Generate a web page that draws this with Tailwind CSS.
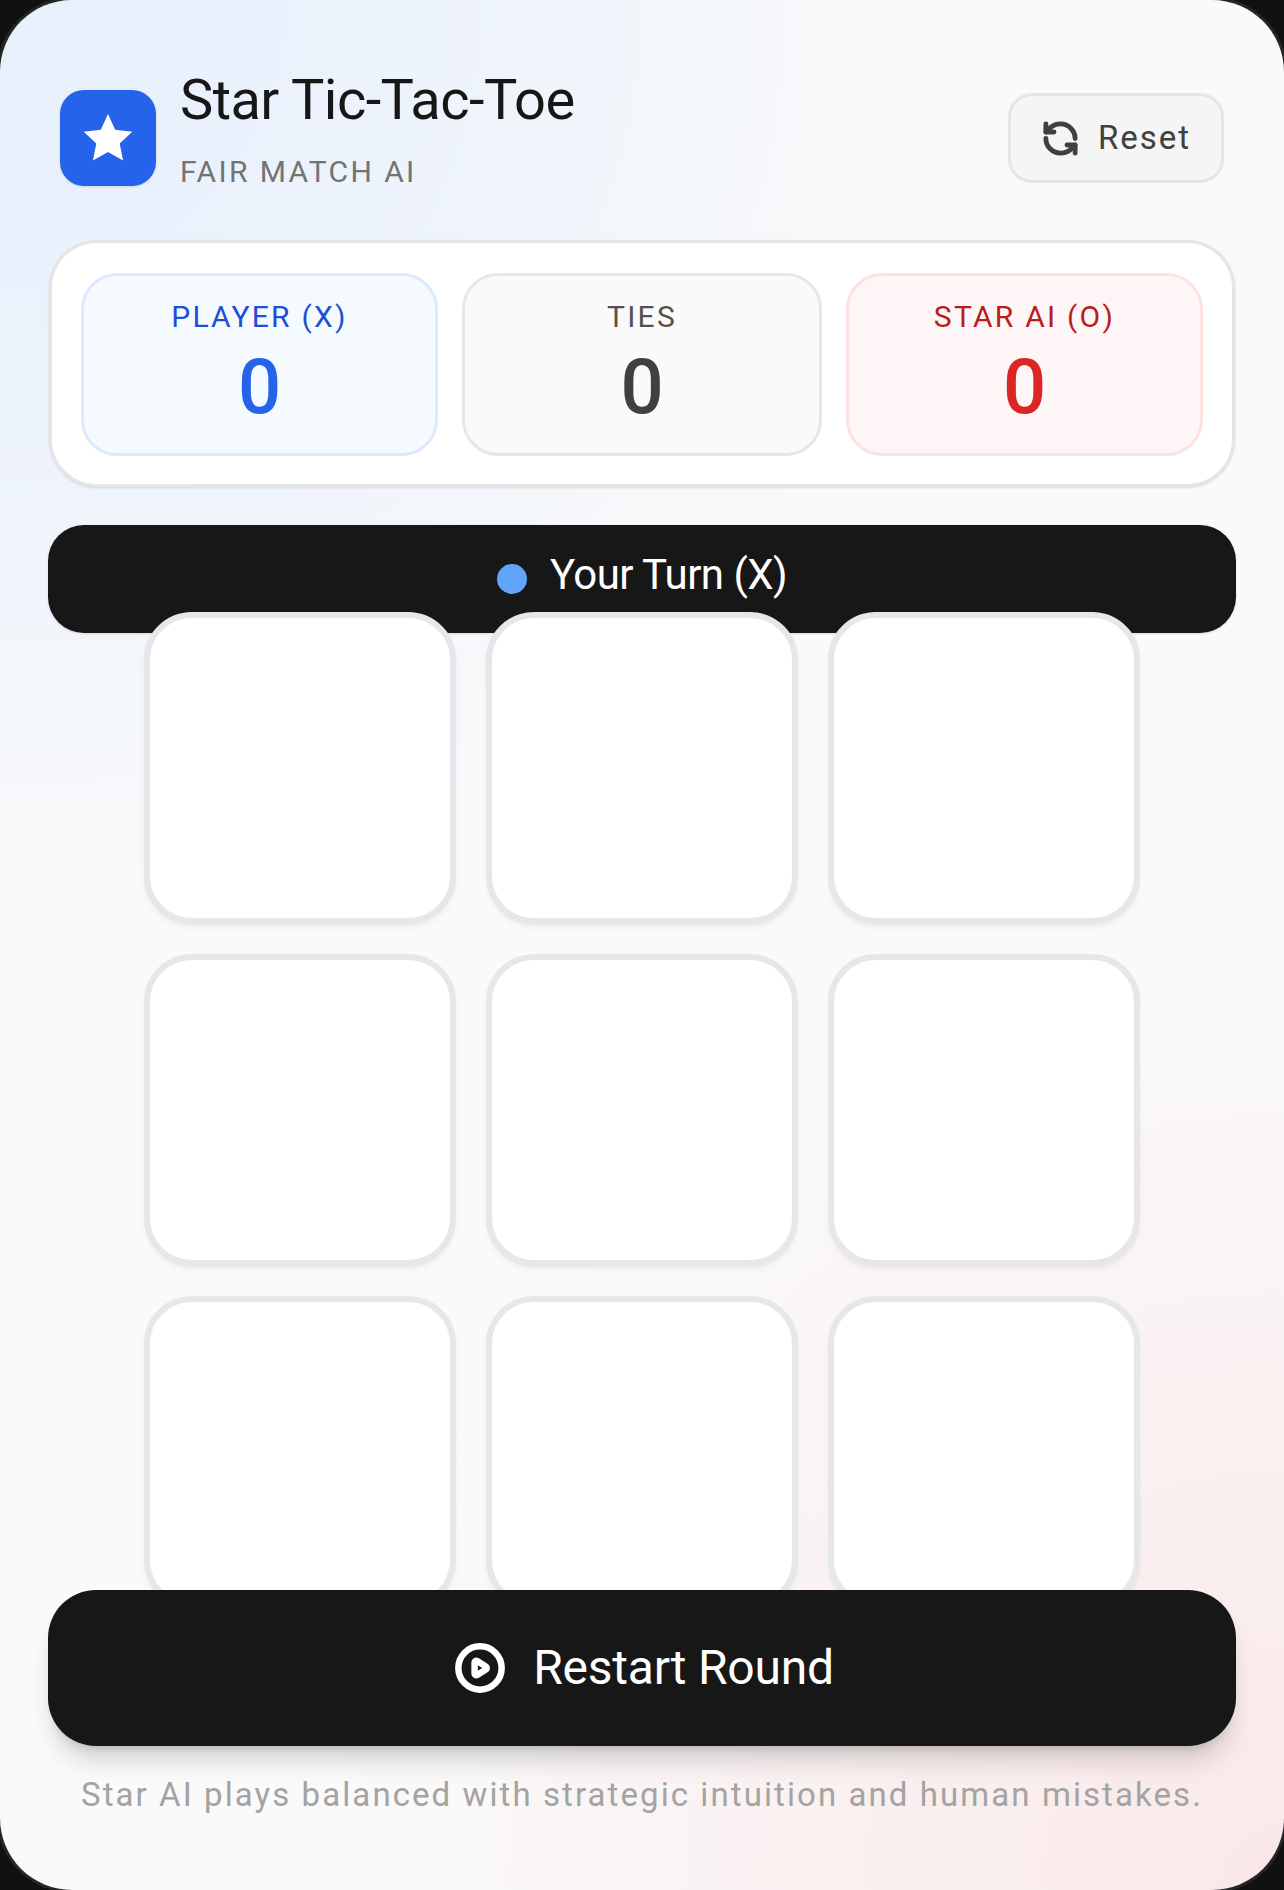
<!DOCTYPE html>
<html lang="en">

<head>
  <meta charset="UTF-8">
  <meta name="viewport" content="width=device-width, initial-scale=1.0">
  <title>Star Tic-Tac-Toe</title>
  <script src="https://cdn.jsdelivr.net/npm/@tailwindcss/browser@4"></script>
</head>

<body class="bg-[#111111]">
  <div class="w-[1284px] h-[1890px] bg-[#111111] overflow-hidden font-[Roboto,sans-serif]">
    <main class="relative h-full rounded-[72px] px-12 pt-[90px] overflow-hidden shadow-[0_0_0_3px_#262626] bg-[#fafafa] bg-[radial-gradient(circle_at_top_left,#e8f0fd_0,#e9f1fc_240px,#e8f0fd00_970px),radial-gradient(circle_at_bottom_right,#fae8e8_0,#fae8e800_950px)]">

      <!-- Header -->
      <header class="flex items-start justify-between px-3 mb-[46px]">
        <div class="flex items-start gap-6">
          <div class="w-24 h-24 rounded-3xl bg-[#2563eb] shadow-sm flex items-center justify-center">
            <svg class="w-[54px] h-[54px]" viewBox="0 0 24 24" fill="#ffffff">
              <path d="M12 1.3l3.2 7 7.6.9-5.6 5.2 1.5 7.6-6.7-3.8L5.300 22l1.500-7.600L1.200 9.200l7.600-.9z" />
            </svg>
          </div>
          <div class="-mt-[32px]">
            <h1 class="text-[56px] leading-[84px] tracking-[-0.01em] text-[#171717]">Star Tic-Tac-Toe</h1>
            <p class="text-[30px] leading-[45px] mt-[7px] tracking-[0.08em] text-[#737373]">FAIR MATCH AI</p>
          </div>
        </div>
        <button class="mt-[3px] w-[216px] h-[90px] flex items-center justify-center gap-[18px] rounded-[24px] border-[3px] border-[#e5e5e5] bg-[#f5f5f5] text-[33px] tracking-[0.06em] text-[#404040]">
          <svg class="w-[39px] h-[39px]" viewBox="0 0 24 24" fill="none" stroke="#404040" stroke-width="3" stroke-linecap="round" stroke-linejoin="round">
            <path d="M21 12a9 9 0 0 0-9-9 9.750 9.750 0 0 0-6.740 2.740L3 8" />
            <path d="M3 3v5h5" />
            <path d="M3 12a9 9 0 0 0 9 9 9.750 9.750 0 0 0 6.740-2.740L21 16" />
            <path d="M16 16h5v5" />
          </svg>
          Reset
        </button>
      </header>

      <!-- Scores -->
      <section class="mx-[1px] h-[247px] mb-[38px] rounded-[48px] border-[3px] border-[#e5e5e5] bg-white shadow-sm px-[29px] pt-[30px] grid grid-cols-[357px_360px_357px] gap-[24px]">
        <div class="h-[183px] rounded-[36px] border-[3px] border-[#dbeafe] bg-[#f5faff] pt-[18px] text-center">
          <p class="text-[30px] leading-[45px] tracking-[0.075em] text-[#1d4ed8]">PLAYER (X)</p>
          <p class="text-[76px] leading-[72px] mt-[12px] font-medium text-[#2563eb]">0</p>
        </div>
        <div class="h-[183px] rounded-[36px] border-[3px] border-[#e5e7eb] bg-[#fafafa] pt-[18px] text-center">
          <p class="text-[30px] leading-[45px] tracking-[0.075em] text-[#525252]">TIES</p>
          <p class="text-[76px] leading-[72px] mt-[12px] font-medium text-[#404040]">0</p>
        </div>
        <div class="h-[183px] rounded-[36px] border-[3px] border-[#fee2e2] bg-[#fef6f6] pt-[18px] text-center">
          <p class="text-[30px] leading-[45px] tracking-[0.075em] text-[#b91c1c]">STAR AI (O)</p>
          <p class="text-[76px] leading-[72px] mt-[12px] font-medium text-[#dc2626]">0</p>
        </div>
      </section>

      <!-- Status -->
      <div class="h-[108px] rounded-[36px] bg-[#171717] shadow-sm flex items-center justify-center gap-[23px]">
        <span class="w-[30px] h-[30px] rounded-full bg-[#60a5fa]"></span>
        <span class="text-[42px] leading-[60px] -mt-[8px] tracking-[-0.013em] text-white">Your Turn (X)</span>
      </div>

      <!-- Board -->
      <div class="relative h-[978px] -mt-[21px]">
        <div class="w-[996px] mx-auto grid grid-cols-3 gap-[30px]">
          <div class="h-[312px] rounded-[48px] border-[6px] border-[#e5e7eb] bg-white shadow-md shadow-black/5"></div>
          <div class="h-[312px] rounded-[48px] border-[6px] border-[#e5e7eb] bg-white shadow-md shadow-black/5"></div>
          <div class="h-[312px] rounded-[48px] border-[6px] border-[#e5e7eb] bg-white shadow-md shadow-black/5"></div>
          <div class="h-[312px] rounded-[48px] border-[6px] border-[#e5e7eb] bg-white shadow-md shadow-black/5"></div>
          <div class="h-[312px] rounded-[48px] border-[6px] border-[#e5e7eb] bg-white shadow-md shadow-black/5"></div>
          <div class="h-[312px] rounded-[48px] border-[6px] border-[#e5e7eb] bg-white shadow-md shadow-black/5"></div>
          <div class="h-[312px] rounded-[48px] border-[6px] border-[#e5e7eb] bg-white shadow-md shadow-black/5"></div>
          <div class="h-[312px] rounded-[48px] border-[6px] border-[#e5e7eb] bg-white shadow-md shadow-black/5"></div>
          <div class="h-[312px] rounded-[48px] border-[6px] border-[#e5e7eb] bg-white shadow-md shadow-black/5"></div>
        </div>
      </div>

      <!-- Restart -->
      <button class="relative w-full h-[156px] pl-[4px] rounded-[48px] bg-[#171717] shadow-xl shadow-black/15 flex items-center justify-center gap-[27px] text-[48px] tracking-[-0.005em] text-white">
        <svg class="w-[52px] h-[52px]" viewBox="0 0 24 24" fill="none" stroke="#ffffff" stroke-width="3" stroke-linecap="round" stroke-linejoin="round">
          <circle cx="12" cy="12" r="10" />
          <path d="M9.500 9.500a.8.8 0 0 1 1.200-.7l4 2.500a.8.8 0 0 1 0 1.400l-4 2.500a.8.8 0 0 1-1.200-.7z" />
        </svg>
        Restart Round
      </button>

      <!-- Footer -->
      <p class="mt-[25px] text-center text-[33px] leading-[48px] tracking-[0.063em] text-[#a3a3a3]">Star AI plays balanced with strategic intuition and human mistakes.</p>
    </main>
  </div>
</body>

</html>
